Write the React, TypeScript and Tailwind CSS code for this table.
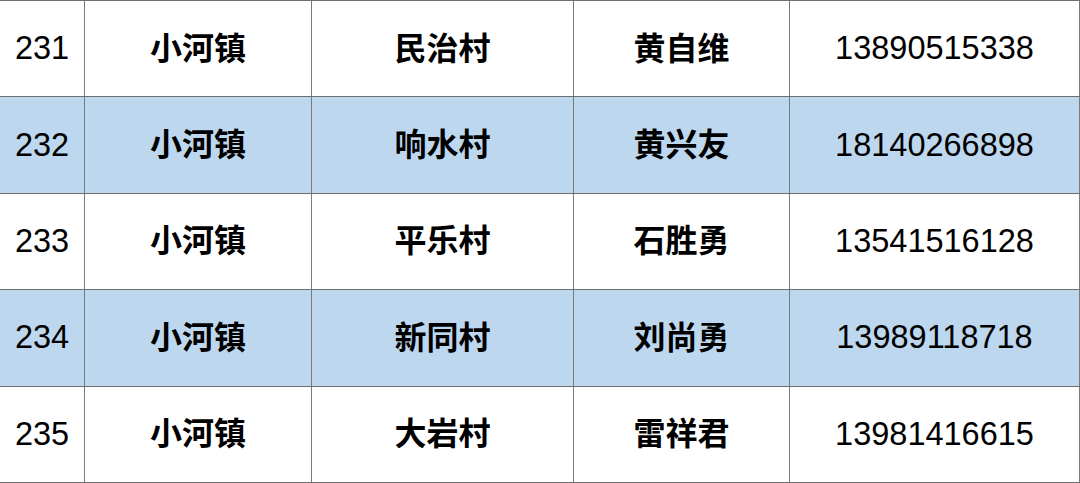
const rows = [
  { no: "231", town: "小河镇", village: "民治村", name: "黄自维", phone: "13890515338" },
  { no: "232", town: "小河镇", village: "响水村", name: "黄兴友", phone: "18140266898" },
  { no: "233", town: "小河镇", village: "平乐村", name: "石胜勇", phone: "13541516128" },
  { no: "234", town: "小河镇", village: "新同村", name: "刘尚勇", phone: "13989118718" },
  { no: "235", town: "小河镇", village: "大岩村", name: "雷祥君", phone: "13981416615" },
]

export default function App() {
  return (
    <div className="w-[1080px] h-[483px] bg-white overflow-hidden border-t border-[#6f6f6f] font-['Liberation_Sans','Noto_Sans_CJK_SC',sans-serif] text-black">
      {rows.map((r, i) => (
        <div
          key={r.no}
          className={`grid grid-cols-[84px_227px_262px_216px_1fr] h-[96.4px] border-b border-[#6f6f6f] ${i % 2 === 1 ? "bg-[#bdd7ee]" : "bg-white"}`}
        >
          <div className="flex items-center justify-center text-[32.5px]">{r.no}</div>
          <div className="flex items-center justify-center border-l border-[#7a7a7a] text-[32px] font-bold">{r.town}</div>
          <div className="flex items-center justify-center border-l border-[#7a7a7a] text-[32px] font-bold">{r.village}</div>
          <div className="flex items-center justify-center border-l border-[#7a7a7a] text-[32px] font-bold">{r.name}</div>
          <div className="flex items-center justify-center border-l border-r border-[#7a7a7a] text-[32.5px]">{r.phone}</div>
        </div>
      ))}
    </div>
  )
}
